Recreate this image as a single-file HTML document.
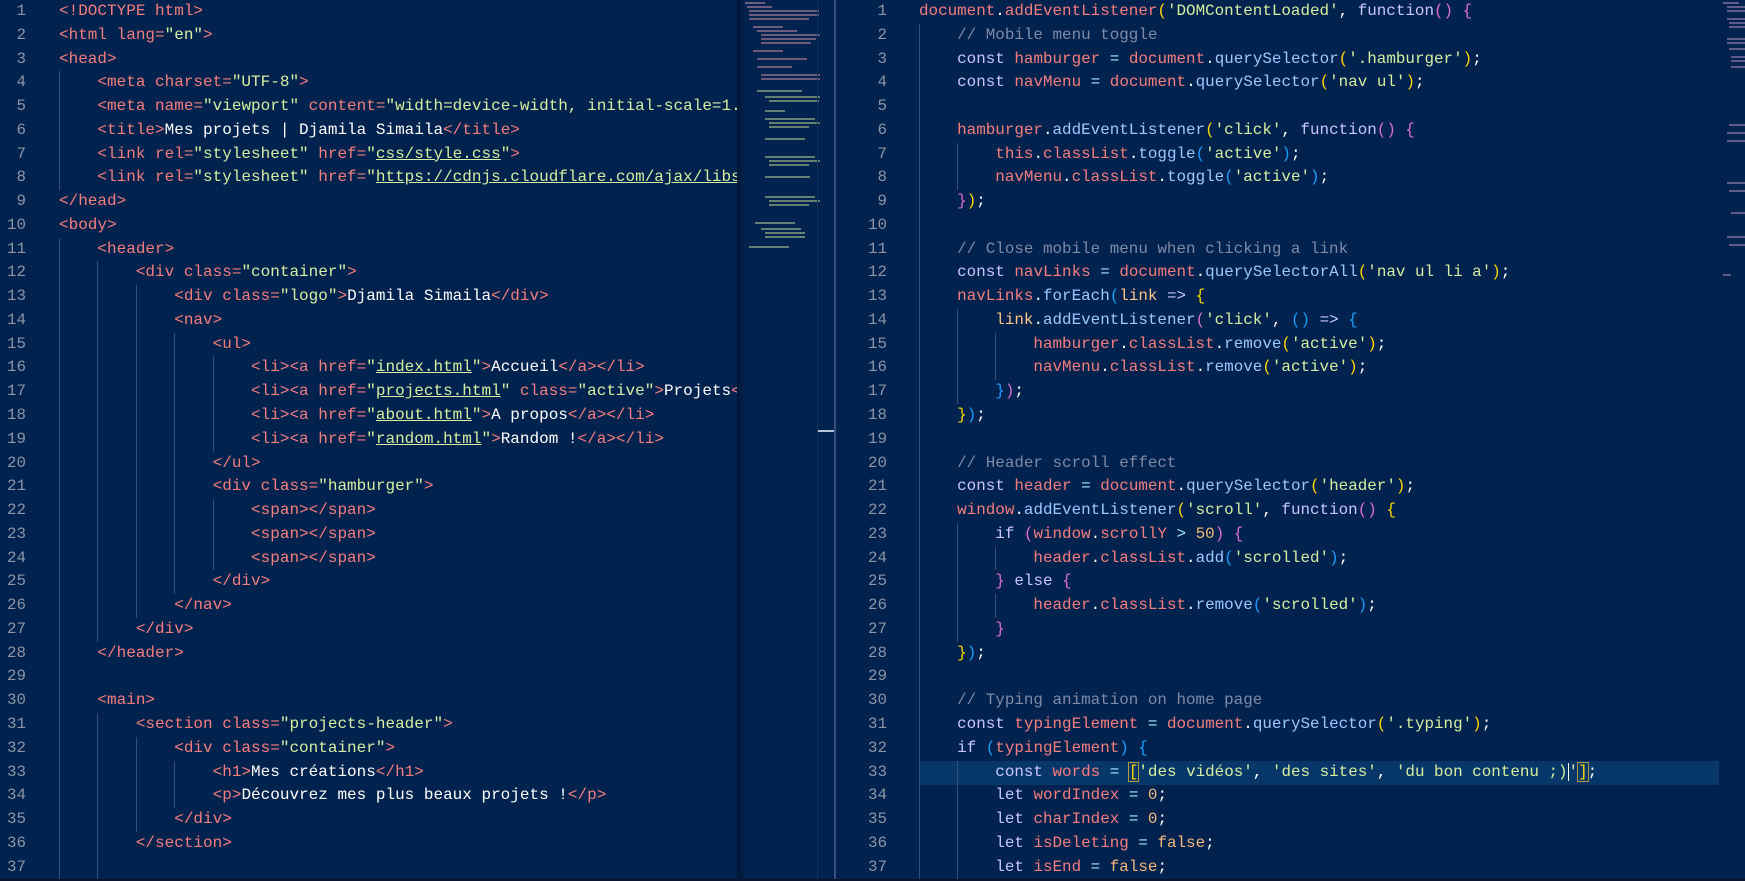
<!DOCTYPE html>
<html><head><meta charset="utf-8">
<style>
*{margin:0;padding:0;box-sizing:border-box}
body{width:1745px;height:881px;background:#00224e;overflow:hidden;position:relative;font-family:"Liberation Mono",monospace;font-size:16px;color:#fff}
.pane{position:absolute;top:0;height:879px;overflow:hidden}
.ln{position:absolute;top:0;text-align:right;color:#8d95a5;font-size:15.8px}
.code{position:absolute;top:0;white-space:normal}
.l{height:23.78px;line-height:23.78px;white-space:pre}
.i{display:inline-block;width:4ch;height:23.78px;vertical-align:top;box-shadow:inset 1px 0 0 #3a4d78}
.t{color:#f47e7e}.s{color:#d5eea0}.u{text-decoration:underline;text-decoration-color:#d5eea0}
.k{color:#c9c6ff}.v{color:#f47e7e}.m{color:#9cc8ff}.c{color:#7e8aa6}.n{color:#f5b97c}
.y{color:#ffd700}.p{color:#da70d6}.b{color:#179fff}.o{color:#9be8ff}.w{color:#fff}.pr{color:#ffc58a}
</style></head><body>
<div class="pane" style="left:0;width:737px">
<div class="ln" style="left:0;width:26px">
<div class="l">1</div><div class="l">2</div><div class="l">3</div><div class="l">4</div><div class="l">5</div><div class="l">6</div><div class="l">7</div><div class="l">8</div><div class="l">9</div><div class="l">10</div><div class="l">11</div><div class="l">12</div><div class="l">13</div><div class="l">14</div><div class="l">15</div><div class="l">16</div><div class="l">17</div><div class="l">18</div><div class="l">19</div><div class="l">20</div><div class="l">21</div><div class="l">22</div><div class="l">23</div><div class="l">24</div><div class="l">25</div><div class="l">26</div><div class="l">27</div><div class="l">28</div><div class="l">29</div><div class="l">30</div><div class="l">31</div><div class="l">32</div><div class="l">33</div><div class="l">34</div><div class="l">35</div><div class="l">36</div><div class="l">37</div>
</div>
<div class="code" style="left:59px">
<div class="l"><span class="t">&lt;!DOCTYPE html&gt;</span></div>
<div class="l"><span class="t">&lt;html lang=</span><span class="s">"en"</span><span class="t">&gt;</span></div>
<div class="l"><span class="t">&lt;head&gt;</span></div>
<div class="l"><span class="i"></span><span class="t">&lt;meta charset=</span><span class="s">"UTF-8"</span><span class="t">&gt;</span></div>
<div class="l"><span class="i"></span><span class="t">&lt;meta name=</span><span class="s">"viewport"</span><span class="t"> content=</span><span class="s">"width=device-width, initial-scale=1.0"</span><span class="t">&gt;</span></div>
<div class="l"><span class="i"></span><span class="t">&lt;title&gt;</span>Mes projets | Djamila Simaila<span class="t">&lt;/title&gt;</span></div>
<div class="l"><span class="i"></span><span class="t">&lt;link rel=</span><span class="s">"stylesheet"</span><span class="t"> href=</span><span class="s">"<span class="u">css/style.css</span>"</span><span class="t">&gt;</span></div>
<div class="l"><span class="i"></span><span class="t">&lt;link rel=</span><span class="s">"stylesheet"</span><span class="t"> href=</span><span class="s">"<span class="u">https://cdnjs.cloudflare.com/ajax/libs/font-awesome</span>"</span></div>
<div class="l"><span class="t">&lt;/head&gt;</span></div>
<div class="l"><span class="t">&lt;body&gt;</span></div>
<div class="l"><span class="i"></span><span class="t">&lt;header&gt;</span></div>
<div class="l"><span class="i"></span><span class="i"></span><span class="t">&lt;div class=</span><span class="s">"container"</span><span class="t">&gt;</span></div>
<div class="l"><span class="i"></span><span class="i"></span><span class="i"></span><span class="t">&lt;div class=</span><span class="s">"logo"</span><span class="t">&gt;</span>Djamila Simaila<span class="t">&lt;/div&gt;</span></div>
<div class="l"><span class="i"></span><span class="i"></span><span class="i"></span><span class="t">&lt;nav&gt;</span></div>
<div class="l"><span class="i"></span><span class="i"></span><span class="i"></span><span class="i"></span><span class="t">&lt;ul&gt;</span></div>
<div class="l"><span class="i"></span><span class="i"></span><span class="i"></span><span class="i"></span><span class="i"></span><span class="t">&lt;li&gt;&lt;a href=</span><span class="s">"<span class="u">index.html</span>"</span><span class="t">&gt;</span>Accueil<span class="t">&lt;/a&gt;&lt;/li&gt;</span></div>
<div class="l"><span class="i"></span><span class="i"></span><span class="i"></span><span class="i"></span><span class="i"></span><span class="t">&lt;li&gt;&lt;a href=</span><span class="s">"<span class="u">projects.html</span>"</span><span class="t"> class=</span><span class="s">"active"</span><span class="t">&gt;</span>Projets<span class="t">&lt;/a&gt;&lt;/li&gt;</span></div>
<div class="l"><span class="i"></span><span class="i"></span><span class="i"></span><span class="i"></span><span class="i"></span><span class="t">&lt;li&gt;&lt;a href=</span><span class="s">"<span class="u">about.html</span>"</span><span class="t">&gt;</span>A propos<span class="t">&lt;/a&gt;&lt;/li&gt;</span></div>
<div class="l"><span class="i"></span><span class="i"></span><span class="i"></span><span class="i"></span><span class="i"></span><span class="t">&lt;li&gt;&lt;a href=</span><span class="s">"<span class="u">random.html</span>"</span><span class="t">&gt;</span>Random !<span class="t">&lt;/a&gt;&lt;/li&gt;</span></div>
<div class="l"><span class="i"></span><span class="i"></span><span class="i"></span><span class="i"></span><span class="t">&lt;/ul&gt;</span></div>
<div class="l"><span class="i"></span><span class="i"></span><span class="i"></span><span class="i"></span><span class="t">&lt;div class=</span><span class="s">"hamburger"</span><span class="t">&gt;</span></div>
<div class="l"><span class="i"></span><span class="i"></span><span class="i"></span><span class="i"></span><span class="i"></span><span class="t">&lt;span&gt;&lt;/span&gt;</span></div>
<div class="l"><span class="i"></span><span class="i"></span><span class="i"></span><span class="i"></span><span class="i"></span><span class="t">&lt;span&gt;&lt;/span&gt;</span></div>
<div class="l"><span class="i"></span><span class="i"></span><span class="i"></span><span class="i"></span><span class="i"></span><span class="t">&lt;span&gt;&lt;/span&gt;</span></div>
<div class="l"><span class="i"></span><span class="i"></span><span class="i"></span><span class="i"></span><span class="t">&lt;/div&gt;</span></div>
<div class="l"><span class="i"></span><span class="i"></span><span class="i"></span><span class="t">&lt;/nav&gt;</span></div>
<div class="l"><span class="i"></span><span class="i"></span><span class="t">&lt;/div&gt;</span></div>
<div class="l"><span class="i"></span><span class="t">&lt;/header&gt;</span></div>
<div class="l"><span class="i"></span></div>
<div class="l"><span class="i"></span><span class="t">&lt;main&gt;</span></div>
<div class="l"><span class="i"></span><span class="i"></span><span class="t">&lt;section class=</span><span class="s">"projects-header"</span><span class="t">&gt;</span></div>
<div class="l"><span class="i"></span><span class="i"></span><span class="i"></span><span class="t">&lt;div class=</span><span class="s">"container"</span><span class="t">&gt;</span></div>
<div class="l"><span class="i"></span><span class="i"></span><span class="i"></span><span class="i"></span><span class="t">&lt;h1&gt;</span>Mes créations<span class="t">&lt;/h1&gt;</span></div>
<div class="l"><span class="i"></span><span class="i"></span><span class="i"></span><span class="i"></span><span class="t">&lt;p&gt;</span>Découvrez mes plus beaux projets !<span class="t">&lt;/p&gt;</span></div>
<div class="l"><span class="i"></span><span class="i"></span><span class="i"></span><span class="t">&lt;/div&gt;</span></div>
<div class="l"><span class="i"></span><span class="i"></span><span class="t">&lt;/section&gt;</span></div>
<div class="l"><span class="i"></span><span class="i"></span></div>
</div>
</div>
<div style="position:absolute;left:737px;top:0;width:8px;height:879px;background:linear-gradient(90deg,rgba(0,0,0,.35),rgba(0,0,0,0))"></div>
<svg style="position:absolute;left:745px;top:0" width="75" height="260">
<g fill="#8a6a8a" opacity=".8">
<rect x="0" y="2" width="20" height="2"/><rect x="2" y="6" width="25" height="2"/><rect x="4" y="10" width="70" height="2"/><rect x="4" y="14" width="70" height="2"/><rect x="4" y="18" width="60" height="2"/>
<rect x="8" y="26" width="30" height="2"/><rect x="12" y="30" width="40" height="2"/><rect x="16" y="34" width="60" height="2"/><rect x="16" y="38" width="55" height="2"/><rect x="16" y="42" width="50" height="2"/>
<rect x="8" y="50" width="30" height="2"/><rect x="12" y="58" width="50" height="2"/><rect x="12" y="66" width="35" height="2"/><rect x="16" y="74" width="60" height="2"/><rect x="16" y="78" width="60" height="2"/>
</g>
<g fill="#7f9a7a" opacity=".8">
<rect x="12" y="90" width="45" height="2"/><rect x="20" y="96" width="60" height="2"/><rect x="24" y="100" width="50" height="2"/><rect x="20" y="110" width="20" height="2"/>
<rect x="20" y="118" width="50" height="2"/><rect x="24" y="122" width="55" height="2"/><rect x="24" y="126" width="40" height="2"/><rect x="20" y="138" width="40" height="2"/>
<rect x="20" y="156" width="50" height="2"/><rect x="24" y="160" width="55" height="2"/><rect x="24" y="164" width="40" height="2"/><rect x="20" y="176" width="45" height="2"/>
<rect x="20" y="196" width="50" height="2"/><rect x="24" y="200" width="55" height="2"/><rect x="24" y="204" width="40" height="2"/><rect x="10" y="222" width="40" height="2"/>
<rect x="16" y="228" width="40" height="2"/><rect x="20" y="232" width="40" height="2"/><rect x="20" y="236" width="40" height="2"/><rect x="4" y="246" width="40" height="2"/>
</g>
</svg>
<div style="position:absolute;left:817px;top:0;width:1px;height:879px;background:#16335e"></div>
<div style="position:absolute;left:818px;top:430px;width:16px;height:2px;background:#b8c4d8"></div>
<div style="position:absolute;left:834px;top:0;width:2px;height:879px;background:#3d4f80"></div>

<div class="pane" style="left:836px;width:909px">
<div class="ln" style="left:0;width:51px">
<div class="l">1</div><div class="l">2</div><div class="l">3</div><div class="l">4</div><div class="l">5</div><div class="l">6</div><div class="l">7</div><div class="l">8</div><div class="l">9</div><div class="l">10</div><div class="l">11</div><div class="l">12</div><div class="l">13</div><div class="l">14</div><div class="l">15</div><div class="l">16</div><div class="l">17</div><div class="l">18</div><div class="l">19</div><div class="l">20</div><div class="l">21</div><div class="l">22</div><div class="l">23</div><div class="l">24</div><div class="l">25</div><div class="l">26</div><div class="l">27</div><div class="l">28</div><div class="l">29</div><div class="l">30</div><div class="l">31</div><div class="l">32</div><div class="l">33</div><div class="l">34</div><div class="l">35</div><div class="l">36</div><div class="l">37</div>
</div>
<div style="position:absolute;left:83px;top:761px;width:800px;height:23.78px;background:#073769"></div>
<div class="code" style="left:83px;font-size:15.9px">
<div class="l"><span class="v">document</span>.<span class="v">addEventListener</span><span class="y">(</span><span class="s">'DOMContentLoaded'</span>, <span class="k">function</span><span class="p">()</span> <span class="p">{</span></div>
<div class="l"><span class="i"></span><span class="c">// Mobile menu toggle</span></div>
<div class="l"><span class="i"></span><span class="k">const</span> <span class="v">hamburger</span> <span class="o">=</span> <span class="v">document</span>.<span class="m">querySelector</span><span class="y">(</span><span class="s">'.hamburger'</span><span class="y">)</span>;</div>
<div class="l"><span class="i"></span><span class="k">const</span> <span class="v">navMenu</span> <span class="o">=</span> <span class="v">document</span>.<span class="m">querySelector</span><span class="y">(</span><span class="s">'nav ul'</span><span class="y">)</span>;</div>
<div class="l"><span class="i"></span></div>
<div class="l"><span class="i"></span><span class="v">hamburger</span>.<span class="m">addEventListener</span><span class="y">(</span><span class="s">'click'</span>, <span class="k">function</span><span class="p">()</span> <span class="p">{</span></div>
<div class="l"><span class="i"></span><span class="i"></span><span class="v">this</span>.<span class="v">classList</span>.<span class="m">toggle</span><span class="b">(</span><span class="s">'active'</span><span class="b">)</span>;</div>
<div class="l"><span class="i"></span><span class="i"></span><span class="v">navMenu</span>.<span class="v">classList</span>.<span class="m">toggle</span><span class="b">(</span><span class="s">'active'</span><span class="b">)</span>;</div>
<div class="l"><span class="i"></span><span class="p">}</span><span class="y">)</span>;</div>
<div class="l"><span class="i"></span></div>
<div class="l"><span class="i"></span><span class="c">// Close mobile menu when clicking a link</span></div>
<div class="l"><span class="i"></span><span class="k">const</span> <span class="v">navLinks</span> <span class="o">=</span> <span class="v">document</span>.<span class="m">querySelectorAll</span><span class="y">(</span><span class="s">'nav ul li a'</span><span class="y">)</span>;</div>
<div class="l"><span class="i"></span><span class="v">navLinks</span>.<span class="m">forEach</span><span class="b">(</span><span class="pr">link</span> <span class="k">=&gt;</span> <span class="y">{</span></div>
<div class="l"><span class="i"></span><span class="i"></span><span class="pr">link</span>.<span class="m">addEventListener</span><span class="p">(</span><span class="s">'click'</span>, <span class="b">()</span> <span class="k">=&gt;</span> <span class="b">{</span></div>
<div class="l"><span class="i"></span><span class="i"></span><span class="i"></span><span class="v">hamburger</span>.<span class="v">classList</span>.<span class="m">remove</span><span class="y">(</span><span class="s">'active'</span><span class="y">)</span>;</div>
<div class="l"><span class="i"></span><span class="i"></span><span class="i"></span><span class="v">navMenu</span>.<span class="v">classList</span>.<span class="m">remove</span><span class="y">(</span><span class="s">'active'</span><span class="y">)</span>;</div>
<div class="l"><span class="i"></span><span class="i"></span><span class="b">}</span><span class="p">)</span>;</div>
<div class="l"><span class="i"></span><span class="y">}</span><span class="b">)</span>;</div>
<div class="l"><span class="i"></span></div>
<div class="l"><span class="i"></span><span class="c">// Header scroll effect</span></div>
<div class="l"><span class="i"></span><span class="k">const</span> <span class="v">header</span> <span class="o">=</span> <span class="v">document</span>.<span class="m">querySelector</span><span class="y">(</span><span class="s">'header'</span><span class="y">)</span>;</div>
<div class="l"><span class="i"></span><span class="v">window</span>.<span class="m">addEventListener</span><span class="y">(</span><span class="s">'scroll'</span>, <span class="k">function</span><span class="p">()</span> <span class="y">{</span></div>
<div class="l"><span class="i"></span><span class="i"></span><span class="k">if</span> <span class="p">(</span><span class="v">window</span>.<span class="v">scrollY</span> <span class="o">&gt;</span> <span class="n">50</span><span class="p">)</span> <span class="p">{</span></div>
<div class="l"><span class="i"></span><span class="i"></span><span class="i"></span><span class="v">header</span>.<span class="v">classList</span>.<span class="m">add</span><span class="b">(</span><span class="s">'scrolled'</span><span class="b">)</span>;</div>
<div class="l"><span class="i"></span><span class="i"></span><span class="p">}</span> <span class="k">else</span> <span class="p">{</span></div>
<div class="l"><span class="i"></span><span class="i"></span><span class="i"></span><span class="v">header</span>.<span class="v">classList</span>.<span class="m">remove</span><span class="b">(</span><span class="s">'scrolled'</span><span class="b">)</span>;</div>
<div class="l"><span class="i"></span><span class="i"></span><span class="p">}</span></div>
<div class="l"><span class="i"></span><span class="y">}</span><span class="b">)</span>;</div>
<div class="l"><span class="i"></span></div>
<div class="l"><span class="i"></span><span class="c">// Typing animation on home page</span></div>
<div class="l"><span class="i"></span><span class="k">const</span> <span class="v">typingElement</span> <span class="o">=</span> <span class="v">document</span>.<span class="m">querySelector</span><span class="y">(</span><span class="s">'.typing'</span><span class="y">)</span>;</div>
<div class="l"><span class="i"></span><span class="k">if</span> <span class="b">(</span><span class="v">typingElement</span><span class="b">)</span> <span class="b">{</span></div>
<div class="l"><span class="i"></span><span class="i"></span><span class="k">const</span> <span class="v">words</span> <span class="o">=</span> <span class="y" style="outline:1px solid #b09a40">[</span><span class="s">'des vidéos'</span>, <span class="s">'des sites'</span>, <span class="s">'du bon contenu ;)<span style="border-left:1px solid #fff"></span>'</span><span class="y" style="outline:1px solid #b09a40">]</span>;</div>
<div class="l"><span class="i"></span><span class="i"></span><span class="k">let</span> <span class="v">wordIndex</span> <span class="o">=</span> <span class="n">0</span>;</div>
<div class="l"><span class="i"></span><span class="i"></span><span class="k">let</span> <span class="v">charIndex</span> <span class="o">=</span> <span class="n">0</span>;</div>
<div class="l"><span class="i"></span><span class="i"></span><span class="k">let</span> <span class="v">isDeleting</span> <span class="o">=</span> <span class="n">false</span>;</div>
<div class="l"><span class="i"></span><span class="i"></span><span class="k">let</span> <span class="v">isEnd</span> <span class="o">=</span> <span class="n">false</span>;</div>
</div>
<svg style="position:absolute;left:887px;top:0" width="22" height="280">
<g fill="#7a6a9a" opacity=".8">
<rect x="0" y="2" width="16" height="2"/><rect x="4" y="6" width="18" height="2"/><rect x="4" y="10" width="18" height="2"/><rect x="4" y="18" width="18" height="2"/><rect x="6" y="22" width="16" height="2"/><rect x="6" y="26" width="16" height="2"/>
<rect x="4" y="38" width="18" height="2"/><rect x="4" y="42" width="18" height="2"/><rect x="6" y="48" width="16" height="2"/><rect x="8" y="56" width="14" height="2"/><rect x="8" y="60" width="14" height="2"/><rect x="8" y="66" width="14" height="2"/>
<rect x="6" y="124" width="16" height="2"/><rect x="4" y="132" width="18" height="2"/><rect x="4" y="140" width="18" height="2"/>
<rect x="4" y="182" width="18" height="2"/><rect x="6" y="190" width="16" height="2"/><rect x="8" y="212" width="14" height="2"/><rect x="4" y="236" width="18" height="2"/><rect x="6" y="244" width="16" height="2"/><rect x="0" y="274" width="8" height="2"/>
</g>
</svg>
</div>
<div style="position:absolute;left:0;top:879px;width:1745px;height:2px;background:#0a1630"></div>
</body></html>
